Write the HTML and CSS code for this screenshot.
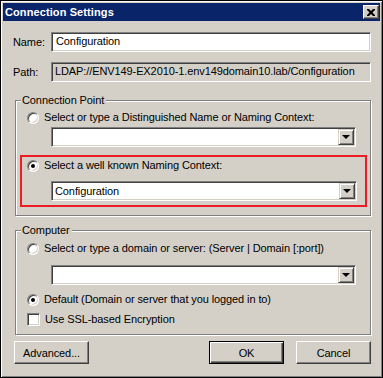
FILE: index.html
```html
<!DOCTYPE html>
<html lang="en">
<head>
  <meta charset="UTF-8" />
  <title>Connection Settings</title>
  <link rel="stylesheet" href="styles.css">
</head>
<body>
  <div class="window">
    <div class="titlebar">
      <span class="title">Connection Settings</span>
      <span class="close-btn">
        <svg width="8" height="7" viewBox="0 0 8 7">
          <path d="M0 0h2l2 2 2-2h2v1l-2.5 2.5L8 6v1H6L4 5 2 7H0V6l2.5-2.5L0 1z" fill="#000"/>
        </svg>
      </span>
    </div>

    <div class="content">
      <div class="field-row">
        <span class="field-label">Name:</span>
        <div class="edit">Configuration</div>
      </div>
      <div class="field-row path-row">
        <span class="field-label">Path:</span>
        <div class="edit readonly">LDAP://ENV149-EX2010-1.env149domain10.lab/Configuration</div>
      </div>

      <fieldset class="group group-connection">
        <legend>Connection Point</legend>
        <div class="option"><span class="radio"></span>Select or type a Distinguished Name or Naming Context:</div>
        <div class="combo"><div class="combo-text"></div><span class="drop"></span></div>

        <div class="highlight">
          <div class="option"><span class="radio checked"></span>Select a well known Naming Context:</div>
          <div class="combo"><div class="combo-text">Configuration</div><span class="drop"></span></div>
        </div>
      </fieldset>

      <fieldset class="group group-computer">
        <legend>Computer</legend>
        <div class="option"><span class="radio"></span>Select or type a domain or server: (Server | Domain [:port])</div>
        <div class="combo combo-server"><div class="combo-text"></div><span class="drop"></span></div>
        <div class="option option-default"><span class="radio checked"></span>Default (Domain or server that you logged in to)</div>
        <div class="option option-ssl"><span class="checkbox"></span>Use SSL-based Encryption</div>
      </fieldset>

      <div class="buttons">
        <button class="btn btn-advanced">Advanced...</button>
        <div class="btn-group">
          <button class="btn btn-default">OK</button>
          <button class="btn">Cancel</button>
        </div>
      </div>
    </div>
  </div>
</body>
</html>
```

FILE: styles.css
```css
body {
  margin: 0;
  font-family: 'Liberation Sans', Arial, sans-serif;
  font-size: 11px;
  letter-spacing: -0.1px;
  color: #000;
  background: #fff;
}

.window {
  box-sizing: border-box;
  width: 383px;
  height: 378px;
  padding: 2px;
  background-color: #d4d0c8;
  border: 1px solid #000;
  box-shadow: inset 1px 1px 0 #fff, inset -1px -1px 0 #808080;
}

.titlebar {
  height: 18px;
  background-color: #0a246a;
  display: flex;
  align-items: center;
  justify-content: space-between;
  padding: 0 1px 0 2px;
}

.title {
  color: #fff;
  font-weight: bold;
  font-size: 11px;
  letter-spacing: 0.1px;
}

.close-btn {
  box-sizing: border-box;
  width: 16px;
  height: 14px;
  background-color: #d4d0c8;
  border: 1px solid;
  border-color: #fff #404040 #404040 #fff;
  box-shadow: inset -1px -1px 0 #808080;
  display: flex;
  align-items: center;
  justify-content: center;
}

.content {
  padding: 11px 9px 0 10px;
}

.field-row {
  display: flex;
  align-items: center;
}

.path-row {
  margin-top: 10px;
}

.field-label {
  width: 38px;
  flex: none;
}

.edit {
  box-sizing: border-box;
  flex: 1;
  height: 20px;
  line-height: 16px;
  padding: 0 4px;
  background-color: #fff;
  border: 1px solid;
  border-color: #808080 #fff #fff #808080;
  box-shadow: inset 1px 1px 0 #404040, inset -1px -1px 0 #d4d0c8;
  white-space: nowrap;
  overflow: hidden;
}

.edit.readonly {
  background-color: #d4d0c8;
  padding: 0 3px;
}

.group {
  margin: 11px 0 0 2px;
  padding: 4px 0 0 11px;
  border: 1px solid #808080;
  box-shadow: inset 1px 1px 0 #fff, 1px 1px 0 #fff;
  min-width: 0;
}

.group legend {
  margin-left: -6px;
  padding: 0 2px 0 1px;
  line-height: 14px;
  background-color: #d4d0c8;
}

.group-connection {
  padding-bottom: 8px;
}

.group-computer {
  margin-top: 7px;
  padding-top: 5px;
  padding-bottom: 8px;
}

.option {
  display: flex;
  align-items: center;
  height: 13px;
  line-height: 13px;
  white-space: nowrap;
}

.radio {
  box-sizing: border-box;
  position: relative;
  width: 12px;
  height: 12px;
  margin-right: 5px;
  flex: none;
  border-radius: 50%;
  background-color: #fff;
  border: 1px solid;
  border-color: #808080 #fff #fff #808080;
  box-shadow: inset 1px 1px 0 #404040, inset -1px -1px 0 #d4d0c8;
}

.radio.checked::after {
  content: "";
  position: absolute;
  left: 3px;
  top: 3px;
  width: 4px;
  height: 4px;
  border-radius: 50%;
  background-color: #000;
}

.checkbox {
  box-sizing: border-box;
  width: 13px;
  height: 13px;
  margin-right: 5px;
  flex: none;
  background-color: #fff;
  border: 1px solid;
  border-color: #808080 #fff #fff #808080;
  box-shadow: inset 1px 1px 0 #404040, inset -1px -1px 0 #d4d0c8;
}

.combo {
  box-sizing: border-box;
  display: flex;
  height: 20px;
  margin: 3px 14px 0 24px;
  padding: 1px;
  background-color: #fff;
  border: 1px solid;
  border-color: #808080 #fff #fff #808080;
  box-shadow: inset 1px 1px 0 #404040, inset -1px -1px 0 #d4d0c8;
}

.combo-text {
  flex: 1;
  line-height: 16px;
  padding-left: 2px;
}

.drop {
  box-sizing: border-box;
  position: relative;
  width: 16px;
  height: 16px;
  flex: none;
  background-color: #d4d0c8;
  border: 1px solid;
  border-color: #d4d0c8 #404040 #404040 #d4d0c8;
  box-shadow: inset 1px 1px 0 #fff, inset -1px -1px 0 #808080;
}

.drop::after {
  content: "";
  position: absolute;
  left: 3px;
  top: 5px;
  border-left: 4px solid transparent;
  border-right: 4px solid transparent;
  border-top: 4px solid #000;
  width: 0;
  height: 0;
  margin-left: -0.5px;
}

.highlight {
  margin: 8px 3px 0 -7px;
  padding: 2px 0 4px 5px;
  border: 2px solid #ed1c24;
}

.highlight .combo {
  margin: 9px 8px 0 24px;
}

.combo-server {
  margin-top: 10px;
}

.option-default {
  margin-top: 8px;
}

.option-ssl {
  margin-top: 7px;
}

.buttons {
  display: flex;
  justify-content: space-between;
  margin: 6px 0 0 1px;
}

.btn-group {
  display: flex;
  gap: 12px;
}

.btn {
  box-sizing: border-box;
  width: 75px;
  height: 23px;
  padding: 0;
  font-family: inherit;
  font-size: 11px;
  letter-spacing: inherit;
  color: #000;
  background-color: #d4d0c8;
  border: 1px solid;
  border-color: #fff #404040 #404040 #fff;
  box-shadow: inset -1px -1px 0 #808080;
}

.btn-default {
  border-color: #000;
  box-shadow: inset 1px 1px 0 #fff, inset -1px -1px 0 #404040, inset -2px -2px 0 #808080;
}
```
